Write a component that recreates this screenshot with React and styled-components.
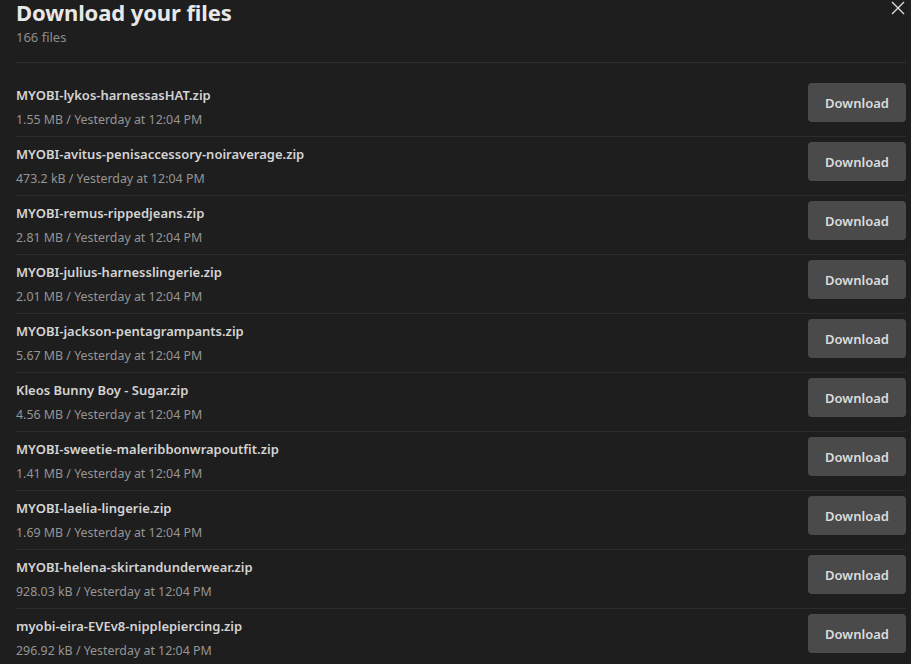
import React from "react";
import styled, { createGlobalStyle } from "styled-components";

const Global = createGlobalStyle`
  html, body { margin: 0; padding: 0; background: #1e1e1e; }
  body { font-family: "Noto Sans", "Open Sans", sans-serif; color: #d6d6d6; }
`;

const Panel = styled.div`
  padding: 0 5px 0 16px;
  height: 664px;
  overflow: hidden;
  box-sizing: border-box;
`;

const Header = styled.header`
  position: relative;
  height: 62px;
  border-bottom: 1px solid #2f2f2f;
`;

const Title = styled.h1`
  margin: 0;
  font-size: 22px;
  line-height: 24px;
  font-weight: 700;
  color: #e8e8e8;
  letter-spacing: -0.1px;
`;

const Count = styled.div`
  margin-top: 5px;
  font-size: 13px;
  line-height: 16px;
  color: #8e8e8e;
`;

const Close = styled.button`
  position: absolute;
  top: 1px;
  right: 0;
  width: 16px;
  height: 16px;
  padding: 0;
  border: 0;
  background: none;
  color: #dcdcdc;
  cursor: pointer;
`;

const List = styled.ul`
  list-style: none;
  margin: 15px 0 0;
  padding: 0;
`;

const Row = styled.li`
  display: flex;
  align-items: flex-start;
  justify-content: space-between;
  height: 59px;
  padding-top: 5px;
  box-sizing: border-box;
  border-bottom: 1px solid #2b2b2b;
`;

const Info = styled.div`
  padding-top: 3px;
`;

const Name = styled.div`
  font-size: 13px;
  line-height: 18px;
  font-weight: 600;
  color: #d4d4d4;
`;

const Meta = styled.div`
  margin-top: 8px;
  font-size: 12.4px;
  line-height: 16px;
  color: #959595;
`;

const DownloadButton = styled.button`
  width: 98px;
  height: 39px;
  border: 0;
  border-radius: 4px;
  background: #4a4a4a;
  color: #dcdcdc;
  font-family: inherit;
  font-size: 13px;
  font-weight: 600;
  cursor: pointer;
`;

const files = [
  ["MYOBI-lykos-harnessasHAT.zip", "1.55 MB"],
  ["MYOBI-avitus-penisaccessory-noiraverage.zip", "473.2 kB"],
  ["MYOBI-remus-rippedjeans.zip", "2.81 MB"],
  ["MYOBI-julius-harnesslingerie.zip", "2.01 MB"],
  ["MYOBI-jackson-pentagrampants.zip", "5.67 MB"],
  ["Kleos Bunny Boy - Sugar.zip", "4.56 MB"],
  ["MYOBI-sweetie-maleribbonwrapoutfit.zip", "1.41 MB"],
  ["MYOBI-laelia-lingerie.zip", "1.69 MB"],
  ["MYOBI-helena-skirtandunderwear.zip", "928.03 kB"],
  ["myobi-eira-EVEv8-nipplepiercing.zip", "296.92 kB"],
];

export default function App() {
  return (
    <>
      <Global />
      <Panel>
        <Header>
          <Title>Download your files</Title>
          <Count>166 files</Count>
          <Close aria-label="Close">
            <svg width="14" height="14" viewBox="0 0 14 14">
              <path d="M1 1L13 13M13 1L1 13" stroke="currentColor" strokeWidth="1.4" />
            </svg>
          </Close>
        </Header>
        <List>
          {files.map(([name, size]) => (
            <Row key={name}>
              <Info>
                <Name>{name}</Name>
                <Meta>{size} / Yesterday at 12:04 PM</Meta>
              </Info>
              <DownloadButton>Download</DownloadButton>
            </Row>
          ))}
        </List>
      </Panel>
    </>
  );
}
